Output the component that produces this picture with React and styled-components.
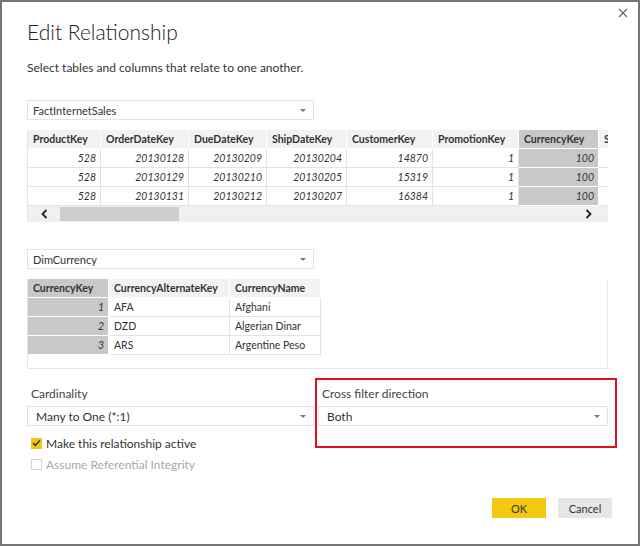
import styled, { createGlobalStyle } from "styled-components";

const GlobalStyle = createGlobalStyle`
  body {
    margin: 0;
    background: #fff;
    font-family: Lato, "Open Sans", sans-serif;
  }
`;

const Dialog = styled("div")`
  box-sizing: border-box;
  width: 640px;
  height: 546px;
  border: 2px solid #767676;
  background: #fff;
  padding: 0 25px;
  display: flex;
  flex-direction: column;
  color: #333;
`;

const TopBar = styled("div")`
  height: 16px;
  display: flex;
  justify-content: flex-end;
  margin-right: -15px;
`;

const CloseButton = styled("button")`
  border: 0;
  background: none;
  padding: 0;
  margin-top: 6px;
  width: 10px;
  height: 10px;
  display: flex;
  cursor: pointer;
`;

const Title = styled("h1")`
  margin: 0;
  font-size: 21px;
  line-height: 28px;
  font-weight: 300;
  color: #222;
`;

const Subtitle = styled("p")`
  margin: 14px 0 0;
  font-size: 12px;
  line-height: 16px;
  color: #333;
`;

const Select = styled("div")`
  box-sizing: border-box;
  width: ${(p) => p.$width || "287px"};
  height: 20px;
  margin-top: ${(p) => p.$top || "0"};
  border: 1px solid #e3e3e3;
  display: flex;
  align-items: center;
  justify-content: space-between;
  padding: 0 7px 0 ${(p) => p.$pad || "5px"};
  font-size: ${(p) => p.$size || "11px"};
  color: #333;
`;

const Caret = styled("span")`
  width: 0;
  height: 0;
  border-left: 3px solid transparent;
  border-right: 3px solid transparent;
  border-top: 3px solid #777;
`;

const Grid1 = styled("div")`
  margin-top: 10px;
  width: 581px;
  border-left: 1px solid #e6e6e6;
  box-sizing: border-box;
  overflow: hidden;
`;

const Table = styled("table")`
  table-layout: fixed;
  border-collapse: separate;
  border-spacing: 0;
  font-size: 10.5px;
  color: #333;
`;

const Th = styled("th")`
  box-sizing: border-box;
  height: 19px;
  padding: 0 5px;
  text-align: left;
  font-weight: 700;
  white-space: nowrap;
  overflow: hidden;
  background: ${(p) => (p.$sel ? "#c8c8c8" : "#f2f2f2")};
  border-right: 1px solid #fff;
  border-bottom: 1px solid #fff;
`;

const Td = styled("td")`
  box-sizing: border-box;
  height: 19px;
  padding: 0 ${(p) => (p.$text ? "5px" : "4px")};
  text-align: ${(p) => (p.$text ? "left" : "right")};
  font-style: ${(p) => (p.$text ? "normal" : "italic")};
  white-space: nowrap;
  overflow: hidden;
  background: ${(p) => (p.$sel ? "#c8c8c8" : "#fff")};
  border-right: 1px solid ${(p) => (p.$sel ? "#fff" : "#e3e3e3")};
  border-bottom: 1px solid ${(p) => (p.$sel ? "#fff" : "#e3e3e3")};
`;

const ScrollBar = styled("div")`
  height: 16px;
  background: #f0f0f0;
  display: flex;
  align-items: center;
`;

const Arrow = styled("span")`
  width: ${(p) => p.$w};
  display: flex;
  justify-content: center;
`;

const Thumb = styled("div")`
  width: 119px;
  height: 14px;
  background: #cdcdcd;
`;

const Spacer = styled("div")`
  flex: 1;
`;

const Grid2 = styled("div")`
  margin-top: 10px;
  width: 581px;
  height: 90px;
  box-sizing: border-box;
  border: 1px solid #e6e6e6;
  border-top: 0;
`;

const Settings = styled("div")`
  margin-top: 9px;
  display: grid;
  grid-template-columns: 287px 302px;
  column-gap: 1px;
`;

const Column = styled("div")`
  padding-top: 8px;
`;

const Highlight = styled("div")`
  box-sizing: border-box;
  height: 70px;
  border: 2px solid #e3101b;
  padding: 6px 7px 0 1px;
`;

const Label = styled("div")`
  font-size: 12px;
  line-height: 16px;
  padding-left: 4px;
  color: #444;
  margin-bottom: 4px;
`;

const CheckRow = styled("label")`
  display: flex;
  align-items: center;
  gap: 4px;
  height: 16px;
  padding-left: 4px;
  margin-top: ${(p) => p.$top};
  font-size: 12px;
  color: ${(p) => (p.$disabled ? "#a8a8a8" : "#333")};
`;

const Box = styled("span")`
  box-sizing: border-box;
  width: 11px;
  height: 11px;
  display: flex;
  align-items: center;
  justify-content: center;
  background: ${(p) => (p.$checked ? "#f2c811" : "#fff")};
  border: 1px solid ${(p) => (p.$checked ? "#f2c811" : "#d6d6d6")};
`;

const Footer = styled("div")`
  margin-top: auto;
  margin-bottom: 26px;
  margin-right: 1px;
  display: flex;
  justify-content: flex-end;
  gap: 12px;
`;

const Button = styled("button")`
  width: 54px;
  height: 20px;
  border: 0;
  padding: 0;
  font-family: inherit;
  font-size: 11px;
  color: #333;
  background: ${(p) => (p.$primary ? "#f2c811" : "#e6e6e6")};
`;

const Chevron = ({ dir }) => (
  <svg width="7" height="10" viewBox="0 0 7 10">
    <path
      d={dir === "left" ? "M5.5 1 L1.5 5 L5.5 9" : "M1.5 1 L5.5 5 L1.5 9"}
      fill="none"
      stroke="#222"
      strokeWidth="1.8"
    />
  </svg>
);

const salesCols = [
  ["ProductKey", 73],
  ["OrderDateKey", 88],
  ["DueDateKey", 78],
  ["ShipDateKey", 80],
  ["CustomerKey", 86],
  ["PromotionKey", 86],
  ["CurrencyKey", 80],
  ["SalesTerritoryKey", 110],
];

const salesRows = [
  ["528", "20130128", "20130209", "20130204", "14870", "1", "100", ""],
  ["528", "20130129", "20130210", "20130205", "15319", "1", "100", ""],
  ["528", "20130131", "20130212", "20130207", "16384", "1", "100", ""],
];

const currencyCols = [
  ["CurrencyKey", 81],
  ["CurrencyAlternateKey", 121],
  ["CurrencyName", 91],
];

const currencyRows = [
  ["1", "AFA", "Afghani"],
  ["2", "DZD", "Algerian Dinar"],
  ["3", "ARS", "Argentine Peso"],
];

export default function App() {
  return (
    <>
      <GlobalStyle />
      <Dialog>
        <TopBar>
          <CloseButton aria-label="Close">
            <svg width="10" height="10" viewBox="0 0 10 10">
              <path d="M1 1 L9 9 M9 1 L1 9" stroke="#666" strokeWidth="1.2" />
            </svg>
          </CloseButton>
        </TopBar>
        <Title>Edit Relationship</Title>
        <Subtitle>Select tables and columns that relate to one another.</Subtitle>

        <Select $top="24px">
          FactInternetSales
          <Caret />
        </Select>
        <Grid1>
          <Table style={{ width: 681 }}>
            <colgroup>
              {salesCols.map(([name, w]) => (
                <col key={name} style={{ width: w }} />
              ))}
            </colgroup>
            <thead>
              <tr>
                {salesCols.map(([name]) => (
                  <Th key={name} $sel={name === "CurrencyKey"}>
                    {name}
                  </Th>
                ))}
              </tr>
            </thead>
            <tbody>
              {salesRows.map((row, i) => (
                <tr key={i}>
                  {row.map((v, j) => (
                    <Td key={j} $sel={j === 6}>
                      {v}
                    </Td>
                  ))}
                </tr>
              ))}
            </tbody>
          </Table>
          <ScrollBar>
            <Arrow $w="32px">
              <Chevron dir="left" />
            </Arrow>
            <Thumb />
            <Spacer />
            <Arrow $w="40px">
              <Chevron dir="right" />
            </Arrow>
          </ScrollBar>
        </Grid1>

        <Select $top="27px">
          DimCurrency
          <Caret />
        </Select>
        <Grid2>
          <Table style={{ width: 293 }}>
            <colgroup>
              {currencyCols.map(([name, w]) => (
                <col key={name} style={{ width: w }} />
              ))}
            </colgroup>
            <thead>
              <tr>
                {currencyCols.map(([name], j) => (
                  <Th key={name} $sel={j === 0}>
                    {name}
                  </Th>
                ))}
              </tr>
            </thead>
            <tbody>
              {currencyRows.map((row, i) => (
                <tr key={i}>
                  {row.map((v, j) => (
                    <Td key={j} $sel={j === 0} $text={j > 0}>
                      {v}
                    </Td>
                  ))}
                </tr>
              ))}
            </tbody>
          </Table>
        </Grid2>

        <Settings>
          <Column>
            <Label>Cardinality</Label>
            <Select $size="12px" $pad="8px">
              Many to One (*:1)
              <Caret />
            </Select>
            <CheckRow $top="9px">
              <Box $checked>
                <svg width="9" height="8" viewBox="0 0 9 8">
                  <path d="M1 4 L3.4 6.4 L8 1.2" fill="none" stroke="#333" strokeWidth="1.5" />
                </svg>
              </Box>
              Make this relationship active
            </CheckRow>
            <CheckRow $top="5px" $disabled>
              <Box />
              Assume Referential Integrity
            </CheckRow>
          </Column>
          <Highlight>
            <Label>Cross filter direction</Label>
            <Select $width="100%" $size="12px" $pad="8px">
              Both
              <Caret />
            </Select>
          </Highlight>
        </Settings>

        <Footer>
          <Button $primary>OK</Button>
          <Button>Cancel</Button>
        </Footer>
      </Dialog>
    </>
  );
}
